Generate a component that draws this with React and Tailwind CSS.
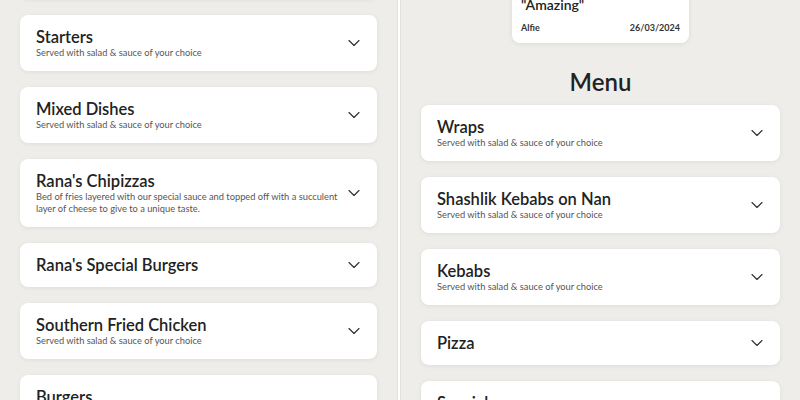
import React from "react";
import { ChevronDown } from "lucide-react";

const SALAD = "Served with salad & sauce of your choice";

const LEFT = [
  { title: "Kids Meals", sub: SALAD },
  { title: "Starters", sub: SALAD },
  { title: "Mixed Dishes", sub: SALAD },
  {
    title: "Rana's Chipizzas",
    sub: "Bed of fries layered with our special sauce and topped off with a succulent layer of cheese to give to a unique taste.",
  },
  { title: "Rana's Special Burgers" },
  { title: "Southern Fried Chicken", sub: SALAD },
  { title: "Burgers", sub: SALAD },
];

const RIGHT = [
  { title: "Wraps", sub: SALAD },
  { title: "Shashlik Kebabs on Nan", sub: SALAD },
  { title: "Kebabs", sub: SALAD },
  { title: "Pizza" },
  { title: "Specials", sub: SALAD },
];

function MenuCard({ item }) {
  return (
    <div className="flex shrink-0 items-center gap-[2px] rounded-lg bg-white py-3 pl-4 pr-[13px] shadow-[0_1px_5px_rgba(0,0,0,0.07)]">
      <div className="flex-1">
        <h3 className="text-[16.5px] font-semibold leading-5 text-[#222]">{item.title}</h3>
        {item.sub && <p className="text-[9.3px] leading-3 text-[#555]">{item.sub}</p>}
      </div>
      <ChevronDown size={20} strokeWidth={1.4} className="shrink-0 text-[#333]" />
    </div>
  );
}

export default function App() {
  return (
    <div className="flex h-[400px] w-[800px] overflow-hidden bg-white font-['Lato',sans-serif]">
      {/* left screen */}
      <section className="w-[398px] border-r border-[#e3e2dd] bg-[#eeede9] px-5">
        <div className="-mt-[57px] flex flex-col gap-4">
          {LEFT.map((item) => (
            <MenuCard key={item.title} item={item} />
          ))}
        </div>
      </section>

      <div className="w-[2px] bg-white" />

      {/* right screen */}
      <section className="flex-1 border-l border-[#e3e2dd] bg-[#eeede9] px-5">
        <div className="-mt-[9px] flex flex-col">
          <div className="mx-auto w-[177px] rounded-lg bg-white px-[9px] pb-2 pt-1 shadow-[0_1px_5px_rgba(0,0,0,0.08)]">
            <p className="text-[14px] font-semibold leading-5 text-[#222]">"Amazing"</p>
            <div className="mt-[6px] flex justify-between text-[9px] font-bold text-[#333]">
              <span>Alfie</span>
              <span>26/03/2024</span>
            </div>
          </div>
          <h2 className="mt-[23px] text-center text-[24px] font-semibold leading-8 text-[#222]">Menu</h2>
          <div className="mt-[7px] flex flex-col gap-4">
            {RIGHT.map((item) => (
              <MenuCard key={item.title} item={item} />
            ))}
          </div>
        </div>
      </section>
    </div>
  );
}
